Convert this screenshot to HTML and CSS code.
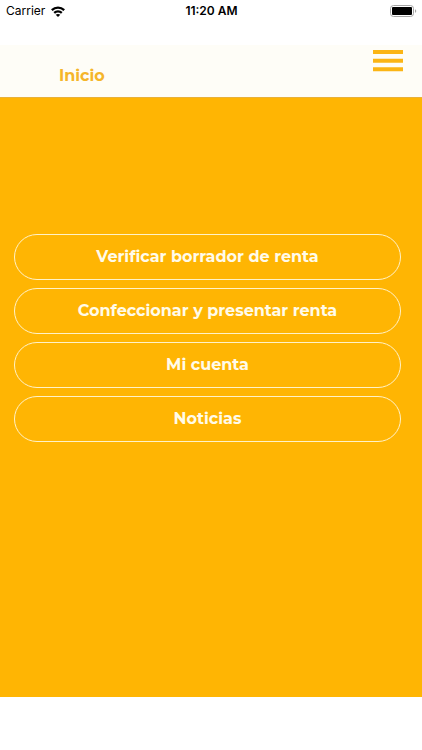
FILE: index.html
```html
<!DOCTYPE html>
<html lang="es">
<head>
<meta charset="utf-8">
<meta name="viewport" content="width=device-width, initial-scale=1">
<title>Inicio</title>
<link rel="stylesheet" href="styles.css">
</head>
<body>
<div class="status">
  <div class="carrier">
    <span>Carrier</span>
    <svg class="wifi" width="14" height="11" viewBox="0 0 14 11" fill="none" stroke="#000" stroke-width="2.300" aria-hidden="true">
      <path d="M.8 4.100C4.400.7 9.600.7 13.200 4.100"/>
      <path d="M3.200 6.900C5.400 4.900 8.600 4.900 10.800 6.900"/>
      <path d="M7 11 4.700 8.700C6.100 7.700 7.900 7.700 9.300 8.700Z" fill="#000" stroke="none"/>
    </svg>
  </div>
  <time class="clock">11:20 AM</time>
  <svg class="battery" width="27" height="12" viewBox="0 0 27 12" aria-hidden="true">
    <rect x=".5" y=".5" width="23" height="11" rx="3" fill="#fff" stroke="#a5a5a5"/>
    <rect x="2" y="2" width="20" height="8" rx="1"/>
    <path d="M25 4.200C26.700 4.700 26.700 7.300 25 7.800Z" fill="#a5a5a5"/>
  </svg>
</div>
<header class="bar">
  <h1 class="title">Inicio</h1>
  <button class="menu" type="button" aria-label="Menú">
    <svg width="30" height="22" viewBox="0 0 30 22" fill="#fbb515" aria-hidden="true">
      <path d="M0 0h30v4H0zM0 8.700h30v4H0zM0 17.300h30v4H0z"/>
    </svg>
  </button>
</header>
<main class="content">
  <button class="option" type="button">Verificar borrador de renta</button>
  <button class="option" type="button">Confeccionar y presentar renta</button>
  <button class="option" type="button">Mi cuenta</button>
  <button class="option" type="button">Noticias</button>
</main>
</body>
</html>
```
FILE: styles.css
```css
* {
  box-sizing: border-box;
}

body {
  display: flex;
  flex-direction: column;
  min-height: 100vh;
  margin: 0;
  padding-bottom: 53px;
  background: #fff;
  font-family: Montserrat, Inter, sans-serif;
}

.status {
  display: grid;
  grid-template-columns: 1fr auto 1fr;
  align-items: center;
  padding: 3px 5px 26px 6px;
  font: 12px/16px Inter, sans-serif;
  color: #000;
}

.carrier {
  display: flex;
  align-items: center;
  gap: 6px;
}

.clock {
  font-size: 12px;
  font-weight: 600;
}

.battery {
  justify-self: end;
}

.bar {
  display: flex;
  justify-content: space-between;
  align-items: flex-start;
  padding: 5px 19px 11px 59px;
  border-bottom: 1px solid #e8b13a;
  background: #fefdf7;
}

.title {
  align-self: flex-end;
  margin: 0;
  padding-top: 16px;
  font-size: 16px;
  line-height: 20px;
  font-weight: 700;
  color: #f5b52a;
}

.menu {
  display: flex;
  padding: 0;
  border: 0;
  background: none;
}

.content {
  display: flex;
  flex: 1;
  flex-direction: column;
  gap: 8px;
  padding: 136px 21px 24px 14px;
  background: #ffb503;
}

.option {
  padding: 11px 24px;
  border: 1px solid #fff2c8;
  border-radius: 24px;
  background: none;
  font: inherit;
  font-size: 16px;
  line-height: 22px;
  font-weight: 700;
  color: #fffbea;
}
```
